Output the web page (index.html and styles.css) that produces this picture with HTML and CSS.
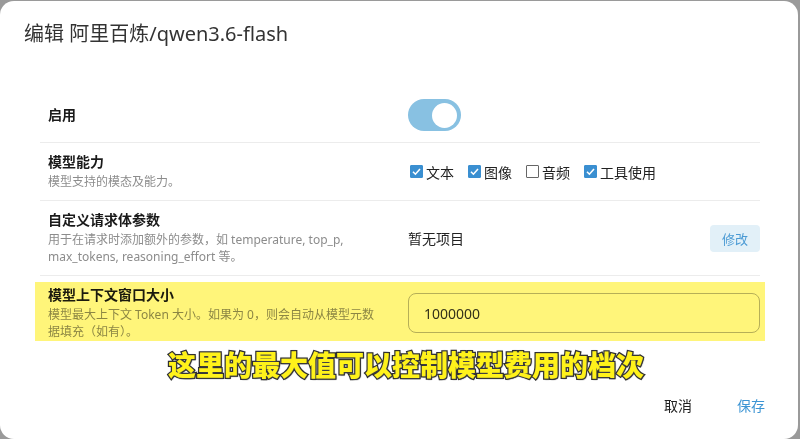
FILE: index.html
```html
<!DOCTYPE html>
<html lang="zh-CN">
<head>
<meta charset="utf-8">
<link rel="stylesheet" href="styles.css">
</head>
<body>
<div class="dialog">
  <h1 class="title">编辑 阿里百炼/qwen3.6-flash</h1>
  <div class="rows">
    <div class="row">
      <div class="info"><div class="label">启用</div></div>
      <div class="control">
        <div class="toggle"><span class="knob"></span></div>
      </div>
    </div>
    <div class="row">
      <div class="info">
        <div class="label">模型能力</div>
        <div class="desc">模型支持的模态及能力。</div>
      </div>
      <div class="control checks">
        <label class="check"><span class="box on"><svg viewBox="0 0 13 13"><path d="M3 6.8 L5.4 9.2 L10 4" fill="none" stroke="#fff" stroke-width="1.6"/></svg></span>文本</label>
        <label class="check"><span class="box on"><svg viewBox="0 0 13 13"><path d="M3 6.8 L5.4 9.2 L10 4" fill="none" stroke="#fff" stroke-width="1.6"/></svg></span>图像</label>
        <label class="check"><span class="box"></span>音频</label>
        <label class="check"><span class="box on"><svg viewBox="0 0 13 13"><path d="M3 6.8 L5.4 9.2 L10 4" fill="none" stroke="#fff" stroke-width="1.6"/></svg></span>工具使用</label>
      </div>
    </div>
    <div class="row">
      <div class="info">
        <div class="label">自定义请求体参数</div>
        <div class="desc">用于在请求时添加额外的参数，如 temperature, top_p,<br>max_tokens, reasoning_effort 等。</div>
      </div>
      <div class="control spread">
        <span class="empty">暂无项目</span>
        <button class="edit">修改</button>
      </div>
    </div>
    <div class="row highlight">
      <div class="info">
        <div class="label">模型上下文窗口大小</div>
        <div class="desc">模型最大上下文 Token 大小。如果为 0，则会自动从模型元数<br>据填充（如有）。</div>
      </div>
      <div class="control">
        <div class="input">1000000</div>
      </div>
    </div>
  </div>
  <div class="caption">这里的最大值可以控制模型费用的档次</div>
  <div class="footer">
    <button class="btn">取消</button>
    <button class="btn primary">保存</button>
  </div>
</div>
</body>
</html>
```
FILE: styles.css
```css
html, body {
  margin: 0;
  padding: 0;
  height: 100%;
  overflow: hidden;
}
body {
  background: #9a9a9a;
  font-family: "Noto Sans", "Noto Sans CJK SC", sans-serif;
  color: #222;
}
.dialog {
  position: relative;
  margin: 1px 2px 0 0;
  height: 438px;
  background: #fff;
  border-radius: 14px;
  box-sizing: border-box;
}
.title {
  margin: 0;
  padding: 20px 24px 0;
  height: 65px;
  box-sizing: border-box;
  font-size: 20px;
  font-weight: 400;
  line-height: 26px;
  color: #333;
}
.rows {
  margin: 22px 38px 0 40px;
}
.row {
  position: relative;
  display: flex;
  align-items: center;
  padding: 10px 0 10px 8px;
  border-bottom: 1px solid #ececec;
}
.row:first-child {
  padding-top: 11px;
  padding-bottom: 11px;
}
.row.highlight {
  border-bottom: none;
}
.row.highlight::after {
  content: "";
  position: absolute;
  left: -5px;
  right: -5px;
  top: 6px;
  height: 59px;
  background: #fff57a;
  mix-blend-mode: multiply;
  pointer-events: none;
}
.info {
  width: 360px;
  flex: none;
}
.label {
  font-size: 14px;
  font-weight: 700;
  line-height: 18px;
  color: #1a1a1a;
}
.desc {
  margin-top: 2px;
  font-size: 12px;
  line-height: 17px;
  color: #8c8c8c;
}
.control {
  flex: 1;
  display: flex;
  align-items: center;
}
.toggle {
  width: 53px;
  height: 32px;
  border-radius: 16px;
  background: #88c1e2;
  position: relative;
}
.knob {
  position: absolute;
  right: 4px;
  top: 3.5px;
  width: 25px;
  height: 25px;
  border-radius: 50%;
  background: #fff;
}
.checks {
  gap: 14px;
  padding-left: 2px;
}
.check {
  display: flex;
  align-items: center;
  font-size: 14px;
  color: #222;
  font-family: "Noto Sans CJK SC", sans-serif;
}
.box {
  width: 11px;
  height: 11px;
  border: 1px solid #666;
  border-radius: 1px;
  background: #fff;
  margin-right: 3px;
  display: inline-block;
  position: relative;
}
.box.on {
  background: #3a8fd1;
  border-color: #3a8fd1;
}
.box svg {
  position: absolute;
  left: -1px;
  top: -1px;
  width: 13px;
  height: 13px;
}
.spread {
  justify-content: space-between;
}
.empty {
  font-size: 14px;
  color: #222;
  font-family: "Noto Sans CJK SC", sans-serif;
}
.edit {
  border: none;
  background: #e2f0f8;
  color: #4a9ad4;
  font-family: "Noto Sans CJK SC", sans-serif;
  font-size: 13px;
  width: 50px;
  height: 27px;
  border-radius: 4px;
  padding: 0;
}
.input {
  width: 100%;
  height: 40px;
  box-sizing: border-box;
  border: 1px solid #b6b6b6;
  border-radius: 8px;
  padding: 0 15px;
  display: flex;
  align-items: center;
  font-size: 14px;
  color: #333;
}
.caption {
  position: absolute;
  left: 168px;
  top: 345px;
  font-family: "Noto Sans CJK SC", sans-serif;
  font-weight: 900;
  font-size: 28px;
  line-height: 36px;
  color: #fff21a;
  -webkit-text-stroke: 2.5px #2a2a2a;
  paint-order: stroke fill;
  text-shadow: 0 0 2px #555, 1px 1px 1px #333;
  letter-spacing: 0;
}
.footer {
  position: absolute;
  right: 27px;
  bottom: 20px;
  display: flex;
  gap: 33px;
}
.btn {
  border: none;
  background: transparent;
  font-family: "Noto Sans CJK SC", sans-serif;
  font-size: 14px;
  color: #222;
  padding: 4px 6px;
}
.btn.primary {
  color: #3d95d4;
}
```
